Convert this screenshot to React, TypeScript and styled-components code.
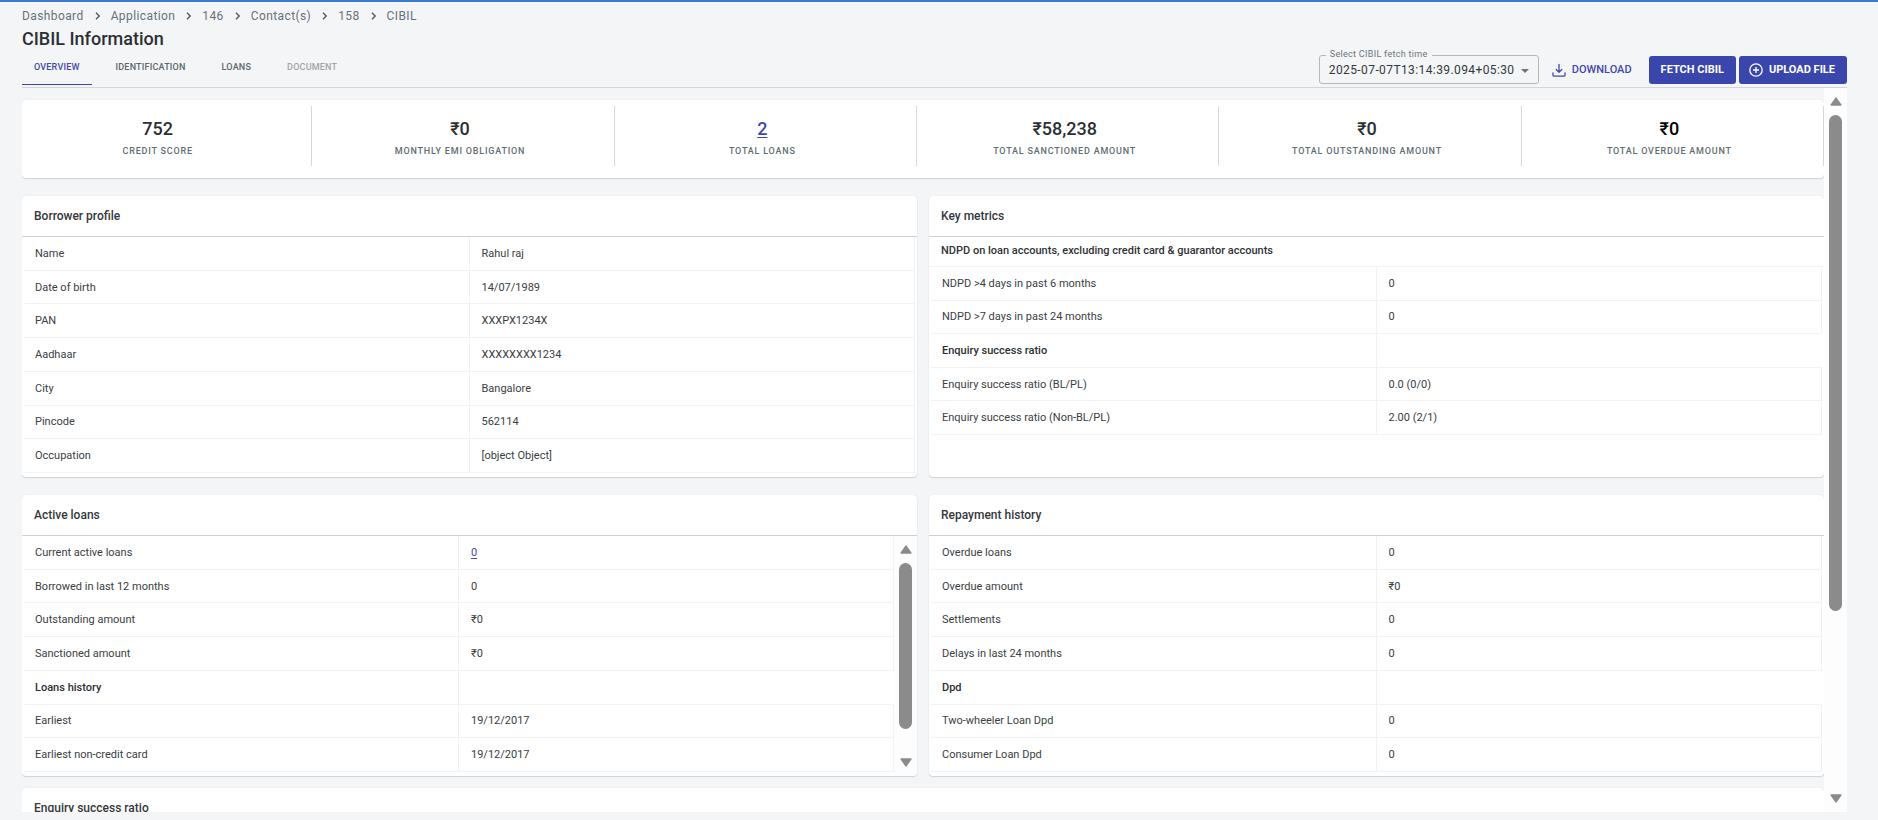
import React from "react";
import styled, { createGlobalStyle } from "styled-components";

const Global = createGlobalStyle`
  *, *::before, *::after { box-sizing: border-box; }
  body {
    margin: 0;
    background: #f4f5f7;
    color: #2f3237;
    font-family: Roboto, "Liberation Sans", sans-serif;
    font-size: 11px;
    line-height: 16px;
  }
`;

const Page = styled.div`
  display: flex;
  flex-direction: column;
  height: 100vh;
  overflow: hidden;
  border-top: 2px solid #3a7bd5;
  padding: 4px 31px 8px 22px;
`;

const Crumbs = styled.nav`
  display: flex;
  align-items: center;
  gap: 10px;
  height: 20px;
  font-size: 12px;
  letter-spacing: 0.4px;
`;

const Crumb = styled.a`
  color: #66727a;
  text-decoration: none;
`;

const Title = styled.h1`
  margin: 0;
  height: 24px;
  font-size: 18px;
  line-height: 26px;
  font-weight: 500;
  color: #2b2f33;
`;

const Toolbar = styled.div`
  display: flex;
  justify-content: space-between;
  align-items: flex-end;
  height: 38px;
  flex: none;
  border-bottom: 1px solid #d3d5d9;
`;

const TabList = styled.div`
  display: flex;
  gap: 12px;
  padding-bottom: 2px;
`;

const Tab = styled.button<{ $active?: boolean }>`
  height: 35px;
  padding: 0 12px;
  border: 0;
  border-bottom: 1px solid ${(p) => (p.$active ? "#3f43a8" : "transparent")};
  background: none;
  font: 500 9px/34px Roboto, sans-serif;
  letter-spacing: 0.2px;
  color: ${(p) => (p.$active ? "#4347ad" : "#5c676d")};
  &:disabled { color: #a0a5a9; }
`;

const Actions = styled.div`
  display: flex;
  align-items: flex-end;
  padding-bottom: 3px;
`;

const FetchField = styled.fieldset`
  position: relative;
  width: 220px;
  height: 35px;
  margin: 0 13px 0 0;
  padding: 0;
  border: 1px solid #b4b8bc;
  border-radius: 3px;
  min-width: 0;
  legend {
    margin-left: 6px;
    padding: 0 4px;
    height: 12px;
    font-size: 9px;
    line-height: 10px;
    letter-spacing: 0.3px;
    color: #6b757b;
  }
  svg { position: absolute; right: 9px; top: 8px; pointer-events: none; }
`;

const FetchSelect = styled.select`
  display: block;
  appearance: none;
  width: 100%;
  height: 18px;
  padding: 0 18px 0 9px;
  border: 0;
  background: transparent;
  font: 400 12px/18px Roboto, sans-serif;
  letter-spacing: 0.4px;
  color: #33383c;
`;

const Button = styled.button<{ $solid?: boolean }>`
  display: flex;
  align-items: center;
  gap: 6px;
  height: 28px;
  padding: 0 ${(p) => (p.$solid ? "12px" : "0")};
  border: 0;
  border-radius: 3px;
  background: ${(p) => (p.$solid ? "#3a46ab" : "none")};
  color: ${(p) => (p.$solid ? "#fff" : "#4347ad")};
  font: ${(p) => (p.$solid ? 700 : 500)} 11px/28px Roboto, sans-serif;
`;

const ButtonGroup = styled.div`
  display: flex;
  gap: 3px;
  margin-left: 17px;
  svg { margin-left: -2px; }
`;

const Viewport = styled.main`
  display: flex;
  flex: 1;
  min-height: 0;
`;

const Content = styled.div`
  flex: 1;
  min-width: 0;
  overflow: hidden;
  padding-top: 12px;
`;

const Card = styled.section`
  background: #fff;
  border-radius: 4px;
  box-shadow: 0 1px 1px rgba(40, 45, 60, 0.16), 0 0 1px rgba(40, 45, 60, 0.15);
`;

const Stats = styled(Card)`
  display: flex;
  height: 78px;
  padding-top: 6px;
  margin-bottom: 18px;
  overflow: hidden;
`;

const StatRow = styled.div`
  display: grid;
  grid-template-columns: repeat(6, 1fr);
  flex: 1;
  height: 60px;
  margin-left: -12px;
`;

const Stat = styled.div`
  display: flex;
  flex-direction: column;
  align-items: center;
  padding: 12px 6px 0 0;
  border-right: 1px solid #d6d8db;
`;

const StatValue = styled.div<{ $strong?: boolean }>`
  font-size: 18px;
  line-height: 21px;
  font-weight: 500;
  color: ${(p) => (p.$strong ? "#000" : "#2b2f33")};
`;

const StatLabel = styled.div`
  margin-top: 4px;
  font-size: 9px;
  line-height: 16px;
  font-weight: 500;
  letter-spacing: 0.8px;
  color: #5f6d73;
`;

const Link = styled.a`
  color: #4347ad;
  text-underline-offset: 2px;
`;

const Grid = styled.div`
  display: grid;
  grid-template-columns: 1fr 1fr;
  gap: 18px 12px;
  margin-bottom: 12px;
`;

const Panel = styled(Card)`
  height: 281px;
  overflow: hidden;
`;

const PanelTitle = styled.h2`
  margin: 0;
  height: 41px;
  padding: 0 12px;
  border-bottom: 1px solid #ced0d3;
  font-size: 12px;
  line-height: 41px;
  font-weight: 500;
  color: #34383c;
`;

const PanelNote = styled.h3`
  margin: 0;
  height: 30px;
  padding: 0 12px;
  border-bottom: 1px solid #f2f2f3;
  font-size: 11px;
  line-height: 27px;
  font-weight: 500;
`;

const PanelBody = styled.div`
  display: flex;
  height: 240px;
`;

const TableWrap = styled.div`
  flex: 1;
  min-width: 0;
  overflow: hidden;
  padding: 0 2px;
  ${PanelBody} & { padding-right: 0; }
`;

const Table = styled.table<{ $height: number }>`
  width: 100%;
  height: ${(p) => p.$height}px;
  table-layout: fixed;
  border-collapse: separate;
  border-spacing: 0;
`;

const Cell = styled.td<{ $strong?: boolean }>`
  width: 50%;
  padding: 1px 11px 0;
  border-right: 1px solid #f2f2f3;
  border-bottom: 1px solid #f2f2f3;
  text-align: left;
  font-weight: ${(p) => (p.$strong ? 500 : 400)};
  color: ${(p) => (p.$strong ? "#2b2f33" : "#3a3e42")};
  & + & { padding-left: 12px; }
  &:empty { border-right-color: transparent; }
`;

const Track = styled.div`
  display: flex;
  flex-direction: column;
  align-items: center;
  flex: none;
  gap: 9px;
  width: 23px;
  padding: 9px 0;
  background: #fdfdfd;
`;

const Rail = styled.div`
  flex: 1;
  width: 13px;
`;

const Thumb = styled.div<{ $share: number }>`
  height: ${(p) => p.$share}%;
  border-radius: 7px;
  background: #8b8b8b;
`;

function Scrollbar({ share }: { share: number }) {
  return (
    <Track aria-hidden="true">
      <svg width="12" height="9" viewBox="0 0 12 9">
        <path d="M6 1.2 10.8 8H1.2Z" fill="#8b8b8b" stroke="#8b8b8b" strokeWidth="1.6" strokeLinejoin="round" />
      </svg>
      <Rail>
        <Thumb $share={share} />
      </Rail>
      <svg width="12" height="9" viewBox="0 0 12 9">
        <path d="M6 7.8 10.8 1H1.2Z" fill="#8b8b8b" stroke="#8b8b8b" strokeWidth="1.6" strokeLinejoin="round" />
      </svg>
    </Track>
  );
}

type Row = [label: string, value?: React.ReactNode];

function DataTable({ rows, height }: { rows: Row[]; height: number }) {
  return (
    <TableWrap>
      <Table $height={height}>
        <tbody>
          {rows.map(([label, value]) => (
            <tr key={label}>
              <Cell as="th" scope="row" $strong={value === undefined}>{label}</Cell>
              <Cell>{value}</Cell>
            </tr>
          ))}
        </tbody>
      </Table>
    </TableWrap>
  );
}

const crumbs = ["Dashboard", "Application", "146", "Contact(s)", "158", "CIBIL"];

const stats: { label: string; value: React.ReactNode; strong?: boolean }[] = [
  { value: "752", label: "CREDIT SCORE" },
  { value: "₹0", label: "MONTHLY EMI OBLIGATION" },
  { value: <Link href="#loans">2</Link>, label: "TOTAL LOANS" },
  { value: "₹58,238", label: "TOTAL SANCTIONED AMOUNT" },
  { value: "₹0", label: "TOTAL OUTSTANDING AMOUNT" },
  { value: "₹0", label: "TOTAL OVERDUE AMOUNT", strong: true },
];

const profile: Row[] = [
  ["Name", "Rahul raj"],
  ["Date of birth", "14/07/1989"],
  ["PAN", "XXXPX1234X"],
  ["Aadhaar", "XXXXXXXX1234"],
  ["City", "Bangalore"],
  ["Pincode", "562114"],
  ["Occupation", "[object Object]"],
];

const metrics: Row[] = [
  ["NDPD >4 days in past 6 months", "0"],
  ["NDPD >7 days in past 24 months", "0"],
  ["Enquiry success ratio"],
  ["Enquiry success ratio (BL/PL)", "0.0 (0/0)"],
  ["Enquiry success ratio (Non-BL/PL)", "2.00 (2/1)"],
];

const activeLoans: Row[] = [
  ["Current active loans", <Link href="#active">0</Link>],
  ["Borrowed in last 12 months", "0"],
  ["Outstanding amount", "₹0"],
  ["Sanctioned amount", "₹0"],
  ["Loans history"],
  ["Earliest", "19/12/2017"],
  ["Earliest non-credit card", "19/12/2017"],
];

const repayment: Row[] = [
  ["Overdue loans", "0"],
  ["Overdue amount", "₹0"],
  ["Settlements", "0"],
  ["Delays in last 24 months", "0"],
  ["Dpd"],
  ["Two-wheeler Loan Dpd", "0"],
  ["Consumer Loan Dpd", "0"],
];

export default function App() {
  return (
    <>
      <Global />
      <Page>
        <Crumbs aria-label="Breadcrumb">
          {crumbs.map((c, i) => (
            <React.Fragment key={c}>
              {i > 0 && (
                <svg width="7" height="8" viewBox="0 0 7 8" aria-hidden="true">
                  <path d="M2 0.8 5.2 4 2 7.2" fill="none" stroke="#4f5a61" strokeWidth="1.4" />
                </svg>
              )}
              <Crumb href="#">{c}</Crumb>
            </React.Fragment>
          ))}
        </Crumbs>
        <Title>CIBIL Information</Title>
        <Toolbar>
          <TabList role="tablist">
            <Tab role="tab" aria-selected="true" $active>OVERVIEW</Tab>
            <Tab role="tab">IDENTIFICATION</Tab>
            <Tab role="tab">LOANS</Tab>
            <Tab role="tab" disabled>DOCUMENT</Tab>
          </TabList>
          <Actions>
            <FetchField>
              <legend><label htmlFor="fetch-time">Select CIBIL fetch time</label></legend>
              <FetchSelect id="fetch-time">
                <option>2025-07-07T13:14:39.094+05:30</option>
              </FetchSelect>
              <svg width="8" height="4" viewBox="0 0 8 4" aria-hidden="true">
                <path d="M0 0h8L4 4Z" fill="#6b757b" />
              </svg>
            </FetchField>
            <Button>
              <svg width="14" height="14" viewBox="0 0 14 14" fill="none" stroke="currentColor" strokeWidth="1.3" aria-hidden="true">
                <path d="M7 1.5v7.6M4.2 6.5 7 9.3l2.8-2.8M1 9.8v2.4q0 1 1 1h10q1 0 1-1V9.8" strokeLinecap="round" strokeLinejoin="round" />
              </svg>
              DOWNLOAD
            </Button>
            <ButtonGroup>
              <Button $solid>FETCH CIBIL</Button>
              <Button $solid>
                <svg width="14" height="14" viewBox="0 0 14 14" fill="none" stroke="currentColor" strokeWidth="1.3" aria-hidden="true">
                  <circle cx="7" cy="7" r="6.2" />
                  <path d="M7 4v6M4 7h6" />
                </svg>
                UPLOAD FILE
              </Button>
            </ButtonGroup>
          </Actions>
        </Toolbar>
        <Viewport>
          <Content>
            <Stats>
              <StatRow>
                {stats.map((s) => (
                  <Stat key={s.label}>
                    <StatValue $strong={s.strong}>{s.value}</StatValue>
                    <StatLabel>{s.label}</StatLabel>
                  </Stat>
                ))}
              </StatRow>
            </Stats>
            <Grid>
              <Panel>
                <PanelTitle>Borrower profile</PanelTitle>
                <DataTable rows={profile} height={236} />
              </Panel>
              <Panel>
                <PanelTitle>Key metrics</PanelTitle>
                <PanelNote>NDPD on loan accounts, excluding credit card &amp; guarantor accounts</PanelNote>
                <DataTable rows={metrics} height={168} />
              </Panel>
              <Panel>
                <PanelTitle>Active loans</PanelTitle>
                <PanelBody>
                  <DataTable rows={activeLoans} height={236} />
                  <Scrollbar share={89} />
                </PanelBody>
              </Panel>
              <Panel>
                <PanelTitle>Repayment history</PanelTitle>
                <DataTable rows={repayment} height={236} />
              </Panel>
            </Grid>
            <Panel>
              <PanelTitle>Enquiry success ratio</PanelTitle>
            </Panel>
          </Content>
          <Scrollbar share={74} />
        </Viewport>
      </Page>
    </>
  );
}
